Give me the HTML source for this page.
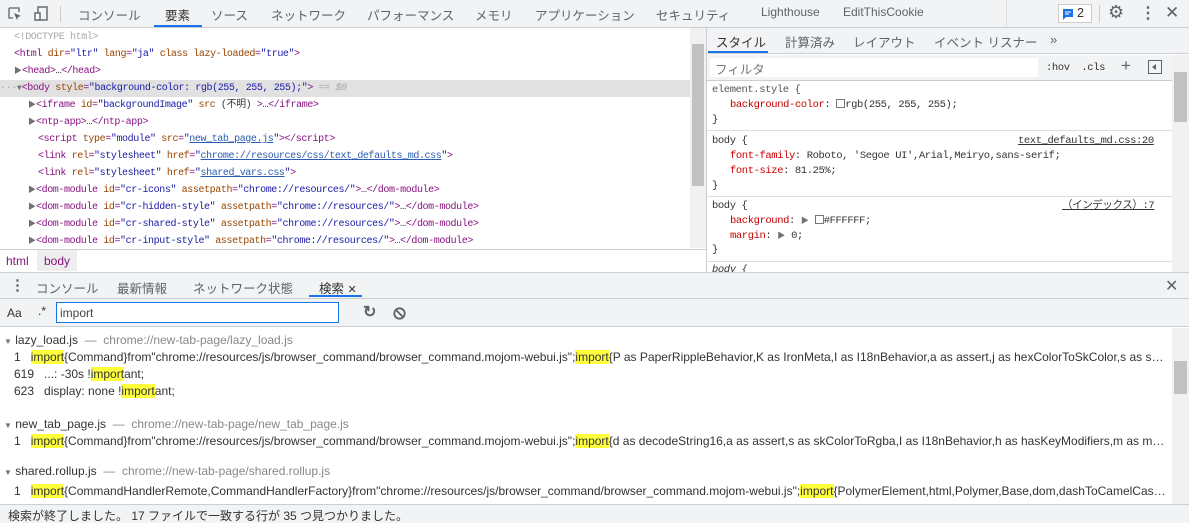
<!DOCTYPE html>
<html><head><meta charset="utf-8"><style>
*{box-sizing:border-box;margin:0;padding:0}
body{width:1189px;height:523px;overflow:hidden;background:#fff;font-family:"Liberation Sans","Noto Sans CJK JP",sans-serif;font-size:12px;color:#333;position:relative}
.abs{position:absolute}
.tb{left:0;top:0;width:1189px;height:28px;background:#f1f3f4;border-bottom:1px solid #cacdd1}
.tb span{position:absolute;top:5px;font-size:12.5px;color:#5f6368;white-space:nowrap}
.mono{font-family:"Liberation Mono","Noto Sans CJK JP",monospace;font-size:10px;letter-spacing:-0.4px;white-space:nowrap}
.el .ln{position:absolute;height:17px;line-height:17px}
.tag{color:#881280}.t{color:#a8a8a8}.an{color:#994500}.av{color:#1a1aa6}.lk{text-decoration:underline;color:#2a5db0}
.tri{color:#727272;font-size:8px;letter-spacing:0}
.sty .ln{position:absolute;left:712px;height:15px;line-height:15px;font-size:10.5px}
.pn{color:#c80000}
.res .ln{position:absolute;white-space:nowrap;font-size:12px;height:16px;line-height:16px;width:1155px;overflow:hidden;text-overflow:ellipsis}
.hl{background:#ffff3c}
.gray{color:#888}
</style></head><body>
<div class="abs tb">
 <svg class="abs" style="left:7px;top:6px" width="16" height="16" viewBox="0 0 16 16"><path d="M2 2h10v4M2 2v10h4" fill="none" stroke="#5f6368" stroke-width="1.3"/><path d="M7 7l7 3-3 1-1 3z" fill="#5f6368"/></svg>
 <svg class="abs" style="left:32px;top:5px" width="18" height="18" viewBox="0 0 18 18"><rect x="6" y="2" width="9" height="13" fill="none" stroke="#5f6368" stroke-width="1.4"/><rect x="3" y="8" width="5" height="7" fill="#fff" stroke="#5f6368" stroke-width="1.4"/></svg>
 <div class="abs" style="left:60px;top:6px;width:1px;height:16px;background:#ccc"></div>
 <span style="left:78px">コンソール</span>
 <span style="left:165px;color:#333">要素</span>
 <div class="abs" style="left:154px;top:25px;width:48px;height:2px;background:#1a73e8"></div>
 <span style="left:211px">ソース</span>
 <span style="left:271px">ネットワーク</span>
 <span style="left:367px">パフォーマンス</span>
 <span style="left:475px">メモリ</span>
 <span style="left:535px">アプリケーション</span>
 <span style="left:656px">セキュリティ</span>
 <span style="left:761px;font-size:12px">Lighthouse</span>
 <span style="left:843px;font-size:12px">EditThisCookie</span>
 <div class="abs" style="left:1006px;top:1px;width:1px;height:26px;background:#ddd"></div>
 <div class="abs" style="left:1058px;top:4px;width:34px;height:19px;border:1px solid #ccc;background:#fff"></div>
 <svg class="abs" style="left:1062px;top:8px" width="12" height="12" viewBox="0 0 12 12"><path d="M1 1h10v8H4l-3 3z" fill="#1a73e8"/><path d="M3 4h6M3 6h4" stroke="#fff"/></svg>
 <span style="left:1077px;top:6px;color:#333">2</span>
 <div class="abs" style="left:1099px;top:5px;width:1px;height:18px;background:#ccc"></div>
 <span style="left:1108px;top:2px;font-size:18px;color:#5f6368">⚙</span>
 <span style="left:1140px;top:3px;font-size:16px;color:#5f6368;font-weight:bold">⋮</span>
 <span style="left:1165px;top:3px;font-size:17px;color:#5f6368">✕</span>
</div>

<div class="el mono">
 <div class="abs" style="left:0;top:80px;width:690px;height:17px;background:#e1e1e1"></div>
 <div class="ln t" style="left:14px;top:29px">&lt;!DOCTYPE html&gt;</div>
 <div class="ln" style="left:14px;top:46px"><span class="tag">&lt;html</span> <span class="an">dir</span><span class="tag">=</span><span class="av">"ltr"</span> <span class="an">lang</span><span class="tag">=</span><span class="av">"ja"</span> <span class="an">class lazy-loaded</span><span class="tag">=</span><span class="av">"true"</span><span class="tag">&gt;</span></div>
 <div class="ln" style="left:14px;top:63px"><span class="tri">▶</span><span class="tag">&lt;head&gt;</span>…<span class="tag">&lt;/head&gt;</span></div>
 <div class="ln" style="left:0;top:80px"><span class="t">···</span><span class="tri">▼</span><span class="tag">&lt;body</span> <span class="an">style</span><span class="tag">=</span><span class="av">"background-color: rgb(255, 255, 255);"</span><span class="tag">&gt;</span> <span class="t">== <i>$0</i></span></div>
 <div class="ln" style="left:28px;top:97px"><span class="tri">▶</span><span class="tag">&lt;iframe</span> <span class="an">id</span><span class="tag">=</span><span class="av">"backgroundImage"</span> <span class="an">src</span> (不明) <span class="tag">&gt;</span>…<span class="tag">&lt;/iframe&gt;</span></div>
 <div class="ln" style="left:28px;top:114px"><span class="tri">▶</span><span class="tag">&lt;ntp-app&gt;</span>…<span class="tag">&lt;/ntp-app&gt;</span></div>
 <div class="ln" style="left:38px;top:131px"><span class="tag">&lt;script</span> <span class="an">type</span><span class="tag">=</span><span class="av">"module"</span> <span class="an">src</span><span class="tag">=</span><span class="av">"<span class="lk">new_tab_page.js</span>"</span><span class="tag">&gt;&lt;/script&gt;</span></div>
 <div class="ln" style="left:38px;top:148px"><span class="tag">&lt;link</span> <span class="an">rel</span><span class="tag">=</span><span class="av">"stylesheet"</span> <span class="an">href</span><span class="tag">=</span><span class="av">"<span class="lk">chrome://resources/css/text_defaults_md.css</span>"</span><span class="tag">&gt;</span></div>
 <div class="ln" style="left:38px;top:165px"><span class="tag">&lt;link</span> <span class="an">rel</span><span class="tag">=</span><span class="av">"stylesheet"</span> <span class="an">href</span><span class="tag">=</span><span class="av">"<span class="lk">shared_vars.css</span>"</span><span class="tag">&gt;</span></div>
 <div class="ln" style="left:28px;top:182px"><span class="tri">▶</span><span class="tag">&lt;dom-module</span> <span class="an">id</span><span class="tag">=</span><span class="av">"cr-icons"</span> <span class="an">assetpath</span><span class="tag">=</span><span class="av">"chrome://resources/"</span><span class="tag">&gt;</span>…<span class="tag">&lt;/dom-module&gt;</span></div>
 <div class="ln" style="left:28px;top:199px"><span class="tri">▶</span><span class="tag">&lt;dom-module</span> <span class="an">id</span><span class="tag">=</span><span class="av">"cr-hidden-style"</span> <span class="an">assetpath</span><span class="tag">=</span><span class="av">"chrome://resources/"</span><span class="tag">&gt;</span>…<span class="tag">&lt;/dom-module&gt;</span></div>
 <div class="ln" style="left:28px;top:216px"><span class="tri">▶</span><span class="tag">&lt;dom-module</span> <span class="an">id</span><span class="tag">=</span><span class="av">"cr-shared-style"</span> <span class="an">assetpath</span><span class="tag">=</span><span class="av">"chrome://resources/"</span><span class="tag">&gt;</span>…<span class="tag">&lt;/dom-module&gt;</span></div>
 <div class="ln" style="left:28px;top:233px"><span class="tri">▶</span><span class="tag">&lt;dom-module</span> <span class="an">id</span><span class="tag">=</span><span class="av">"cr-input-style"</span> <span class="an">assetpath</span><span class="tag">=</span><span class="av">"chrome://resources/"</span><span class="tag">&gt;</span>…<span class="tag">&lt;/dom-module&gt;</span></div>
</div>
<div class="abs" style="left:690px;top:28px;width:16px;height:220px;background:#f1f1f1"></div>
<div class="abs" style="left:692px;top:44px;width:12px;height:142px;background:#c1c1c1"></div>
<div class="abs" style="left:706px;top:28px;width:1px;height:244px;background:#cacdd1"></div>
<div class="abs" style="left:0;top:249px;width:706px;height:23px;border-top:1px solid #cacdd1;background:#fff"></div>
<div class="abs" style="left:37px;top:250px;width:40px;height:21px;background:#eee"></div>
<div class="abs" style="left:6px;top:254px;color:#881280">html</div>
<div class="abs" style="left:44px;top:254px;color:#881280">body</div>

<div class="abs" style="left:707px;top:28px;width:482px;height:26px;background:#f1f3f4;border-bottom:1px solid #cacdd1"></div>
<div class="abs" style="left:716px;top:32px;font-size:12.5px;color:#333">スタイル</div>
<div class="abs" style="left:708px;top:51px;width:60px;height:2px;background:#1a73e8"></div>
<div class="abs" style="left:785px;top:32px;font-size:12.5px;color:#5f6368">計算済み</div>
<div class="abs" style="left:853px;top:32px;font-size:12.5px;color:#5f6368">レイアウト</div>
<div class="abs" style="left:934px;top:32px;font-size:12.5px;color:#5f6368">イベント リスナー</div>
<div class="abs" style="left:1050px;top:32px;font-size:13px;color:#5f6368">»</div>
<div class="abs" style="left:707px;top:55px;width:482px;height:26px;background:#f1f3f4;border-bottom:1px solid #cacdd1"></div>
<div class="abs" style="left:710px;top:58px;width:328px;height:19px;background:#fff"></div>
<div class="abs" style="left:715px;top:59px;font-size:12.5px;color:#777">フィルタ</div>
<div class="abs mono" style="left:1046px;top:62px;color:#333;font-size:10.5px">:hov&nbsp;&nbsp;.cls</div>
<div class="abs" style="left:1121px;top:56px;font-size:17px;color:#5f6368">+</div>
<div class="abs" style="left:1148px;top:60px;width:14px;height:14px;border:1px solid #5f6368"></div>
<div class="abs" style="left:1152px;top:64px;width:0;height:0;border-top:3px solid transparent;border-bottom:3px solid transparent;border-right:4px solid #5f6368"></div>
<div class="abs" style="left:1172px;top:55px;width:17px;height:217px;background:#f1f1f1"></div>
<div class="abs" style="left:1174px;top:72px;width:13px;height:50px;background:#c1c1c1"></div>
<div class="sty mono">
 <div class="ln" style="top:83px;color:#555">element.style {</div>
 <div class="ln" style="top:98px;left:730px"><span class="pn">background-color</span>: <span style="display:inline-block;width:9px;height:9px;border:1px solid #777;vertical-align:-1px"></span>rgb(255, 255, 255);</div>
 <div class="ln" style="top:113px">}</div>
 <div class="abs" style="left:707px;top:130px;width:465px;height:1px;background:#ddd"></div>
 <div class="ln" style="top:134px">body {</div>
 <div class="ln" style="top:134px;left:1018px;text-decoration:underline">text_defaults_md.css:20</div>
 <div class="ln" style="top:149px;left:730px"><span class="pn">font-family</span>: Roboto, 'Segoe UI',Arial,Meiryo,sans-serif;</div>
 <div class="ln" style="top:164px;left:730px"><span class="pn">font-size</span>: 81.25%;</div>
 <div class="ln" style="top:179px">}</div>
 <div class="abs" style="left:707px;top:196px;width:465px;height:1px;background:#ddd"></div>
 <div class="ln" style="top:199px">body {</div>
 <div class="ln" style="top:199px;left:1062px;text-decoration:underline">（インデックス）:7</div>
 <div class="ln" style="top:214px;left:730px"><span class="pn">background</span>: <span class="tri">▶</span> <span style="display:inline-block;width:9px;height:9px;border:1px solid #777;vertical-align:-1px"></span>#FFFFFF;</div>
 <div class="ln" style="top:229px;left:730px"><span class="pn">margin</span>: <span class="tri">▶</span> 0;</div>
 <div class="ln" style="top:243px">}</div>
 <div class="abs" style="left:707px;top:261px;width:465px;height:1px;background:#ddd"></div>
 <div class="ln" style="top:263px;height:9px;overflow:hidden;font-style:italic">body {</div>
</div>

<div class="abs" style="left:0;top:272px;width:1189px;height:27px;background:#f1f3f4;border-top:1px solid #cacdd1;border-bottom:1px solid #cacdd1"></div>
<div class="abs" style="left:10px;top:276px;font-size:15px;color:#5f6368;font-weight:bold">⋮</div>
<div class="abs" style="left:36px;top:278px;font-size:12.5px;color:#5f6368">コンソール</div>
<div class="abs" style="left:117px;top:278px;font-size:12.5px;color:#5f6368">最新情報</div>
<div class="abs" style="left:193px;top:278px;font-size:12.5px;color:#5f6368">ネットワーク状態</div>
<div class="abs" style="left:319px;top:278px;font-size:12.5px;color:#333">検索 <span style="font-size:11px">✕</span></div>
<div class="abs" style="left:309px;top:295px;width:53px;height:2px;background:#1a73e8"></div>
<div class="abs" style="left:1165px;top:276px;font-size:16px;color:#5f6368">✕</div>

<div class="abs" style="left:0;top:299px;width:1189px;height:28px;background:#f1f3f4;border-bottom:1px solid #cacdd1"></div>
<div class="abs" style="left:7px;top:306px;font-size:12px;color:#333">Aa</div>
<div class="abs" style="left:38px;top:304px;font-size:12px;color:#333">.*</div>
<div class="abs" style="left:56px;top:302px;width:283px;height:21px;background:#fff;border:1px solid #1a73e8"></div>
<div class="abs" style="left:60px;top:306px;font-size:12px;color:#444">import</div>
<div class="abs" style="left:363px;top:302px;font-size:16px;color:#5f6368;font-weight:bold">↻</div>
<svg class="abs" style="left:393px;top:307px" width="13" height="13" viewBox="0 0 13 13"><circle cx="6.5" cy="6.5" r="5.2" fill="none" stroke="#5f6368" stroke-width="1.8"/><path d="M3 3l7 7" stroke="#5f6368" stroke-width="1.8"/></svg>

<div class="res">
 <div class="ln" style="left:4px;top:332px"><span class="tri">▼</span> lazy_load.js <span class="gray">&nbsp;— &nbsp;chrome://new-tab-page/lazy_load.js</span></div>
 <div class="ln" style="left:14px;top:349px">1&nbsp;&nbsp;&nbsp;<span class="hl">import</span>{Command}from"chrome://resources/js/browser_command/browser_command.mojom-webui.js";<span class="hl">import</span>{P as PaperRippleBehavior,K as IronMeta,I as I18nBehavior,a as assert,j as hexColorToSkColor,s as skColorToRgba,x as y</div>
 <div class="ln" style="left:14px;top:366px">619&nbsp;&nbsp;&nbsp;...: -30s !<span class="hl">import</span>ant;</div>
 <div class="ln" style="left:14px;top:383px">623&nbsp;&nbsp;&nbsp;display: none !<span class="hl">import</span>ant;</div>
 <div class="ln" style="left:4px;top:416px"><span class="tri">▼</span> new_tab_page.js <span class="gray">&nbsp;— &nbsp;chrome://new-tab-page/new_tab_page.js</span></div>
 <div class="ln" style="left:14px;top:433px">1&nbsp;&nbsp;&nbsp;<span class="hl">import</span>{Command}from"chrome://resources/js/browser_command/browser_command.mojom-webui.js";<span class="hl">import</span>{d as decodeString16,a as assert,s as skColorToRgba,I as I18nBehavior,h as hasKeyModifiers,m as mojoTimeDelta</div>
 <div class="ln" style="left:4px;top:463px"><span class="tri">▼</span> shared.rollup.js <span class="gray">&nbsp;— &nbsp;chrome://new-tab-page/shared.rollup.js</span></div>
 <div class="ln" style="left:14px;top:483px">1&nbsp;&nbsp;&nbsp;<span class="hl">import</span>{CommandHandlerRemote,CommandHandlerFactory}from"chrome://resources/js/browser_command/browser_command.mojom-webui.js";<span class="hl">import</span>{PolymerElement,html,Polymer,Base,dom,dashToCamelCase,mixinBehaviors</div>
</div>
<div class="abs" style="left:1172px;top:328px;width:17px;height:176px;background:#f1f1f1"></div>
<div class="abs" style="left:1174px;top:361px;width:13px;height:33px;background:#c1c1c1"></div>
<div class="abs" style="left:0;top:504px;width:1189px;height:19px;background:#f1f3f4;border-top:1px solid #cacdd1"></div>
<div class="abs" style="left:8px;top:507px;font-size:12px;color:#333">検索が終了しました。 17 ファイルで一致する行が 35 つ見つかりました。</div>
</body></html>
